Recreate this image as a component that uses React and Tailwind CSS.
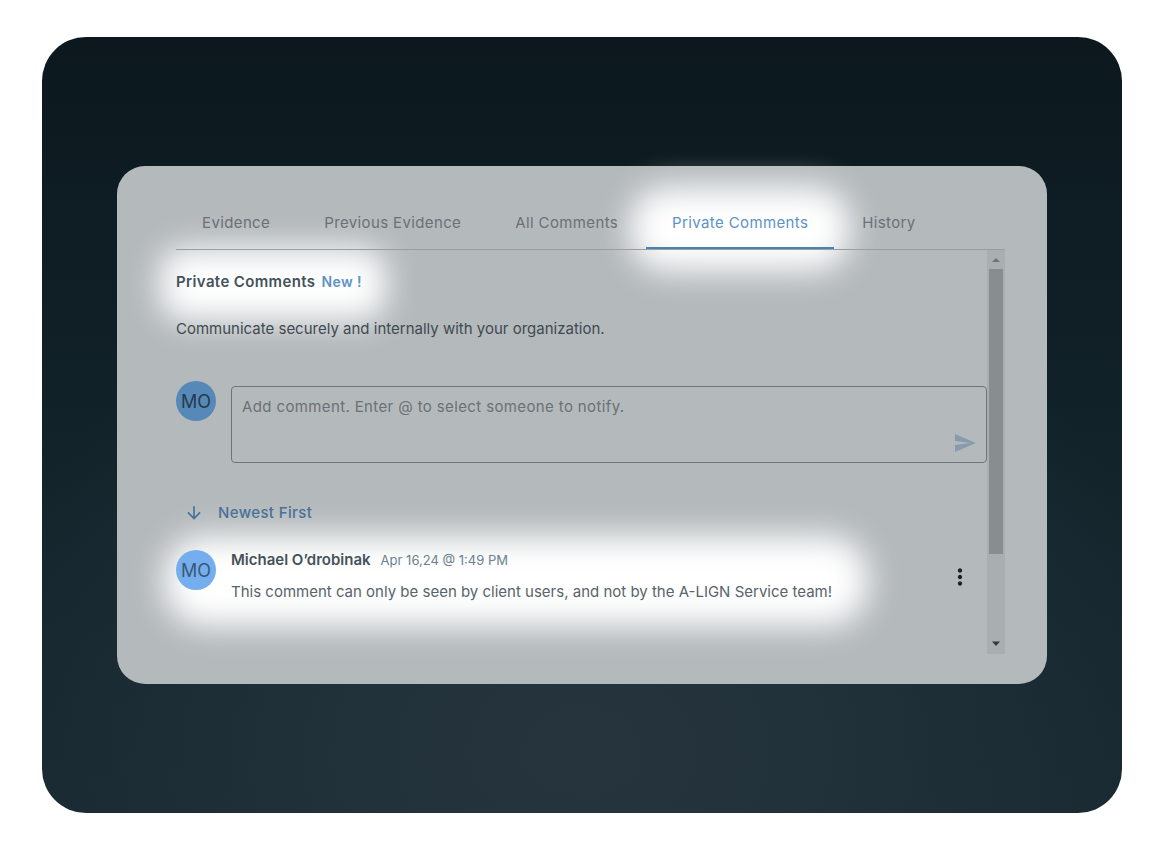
import React, { useState } from 'react';
import { MdArrowDownward, MdMoreVert, MdSend } from 'react-icons/md';

const tabs = ['Evidence', 'Previous Evidence', 'All Comments', 'Private Comments', 'History'];

const comments = [
  {
    id: 1,
    initials: 'MO',
    author: 'Michael O’drobinak',
    date: 'Apr 16,24 @ 1:49 PM',
    text: 'This comment can only be seen by client users, and not by the A-LIGN Service team!',
  },
];

function Avatar({ initials, className }) {
  return (
    <div className={`flex size-10 shrink-0 items-center justify-center rounded-full pt-0.5 text-lg ${className}`}>
      {initials}
    </div>
  );
}

// Soft white spotlight behind the highlighted parts
function Glow({ className }) {
  return <span aria-hidden="true" className={`pointer-events-none absolute -z-10 bg-white ${className}`} />;
}

function Scrollbar() {
  return (
    <div aria-hidden="true" className="flex w-[18px] shrink-0 flex-col items-center bg-[#a9aeb1]">
      <svg width="8" height="19" viewBox="0 0 8 19" fill="#6f7477">
        <path d="M0 12L4 8L8 12Z" />
      </svg>
      <div className="h-[285px] w-3.5 bg-[#888d90]" />
      <svg className="mt-auto" width="8" height="19" viewBox="0 0 8 19" fill="#34393c">
        <path d="M0 6.5L4 11L8 6.5Z" />
      </svg>
    </div>
  );
}

export default function App() {
  const [activeTab, setActiveTab] = useState('Private Comments');
  const [draft, setDraft] = useState('');

  return (
    <div className="min-h-screen bg-white pt-[37px] pr-[46px] pb-[55px] pl-[42px] font-['Inter',sans-serif]">
      <main className="rounded-[44px] bg-[radial-gradient(ellipse_60%_65%_at_50%_92%,#26353d_0%,#21313a_40%,transparent_100%),linear-gradient(to_bottom,#0c181d_0%,#0e1c23_20%,#13242b_60%,#172830_100%)] px-[75px] py-[129px]">
        <section className="isolate rounded-[28px] bg-[#b4b9bc] pt-[31px] pr-[42px] pb-[30px] pl-[59px]">
          <div role="tablist" className="flex gap-0.5 border-b border-[#999ea1]">
            {tabs.map((tab) => {
              const active = tab === activeTab;
              return (
                <button
                  key={tab}
                  type="button"
                  role="tab"
                  aria-selected={active}
                  onClick={() => setActiveTab(tab)}
                  className={`relative border-b-2 px-[26px] pt-4 pb-3.5 text-[15px] leading-5 tracking-wide whitespace-nowrap ${
                    active ? 'border-[#4a82b4] text-[#5c93c4]' : 'border-transparent text-[#6b7174]'
                  }`}
                >
                  {active && <Glow className="-inset-x-4 -top-2.5 -bottom-6 rounded-[36px] blur-lg" />}
                  {tab}
                </button>
              );
            })}
          </div>

          <div className="flex">
            <div className="min-w-0 flex-1 pt-[22px] pb-[52px]">
              <div className="flex">
                <h1 className="relative flex items-center gap-1.5 text-[15px] leading-5 font-semibold tracking-wide text-[#44525a]">
                  <Glow className="-top-6 -right-6 -bottom-7 -left-4 rounded-3xl blur-lg" />
                  Private Comments
                  <span className="text-sm leading-5 text-[#5c93c4]">New !</span>
                </h1>
              </div>

              <p className="mt-[27px] text-[15px] leading-5 text-[#3f4a50]">
                Communicate securely and internally with your organization.
              </p>

              <form className="mt-[42px] flex gap-[15px]" onSubmit={(e) => e.preventDefault()}>
                <Avatar initials="MO" className="bg-[#5688b8] text-[#263a4b]" />
                <div className="relative mt-[5px] flex-1">
                  <textarea
                    aria-label="Add comment"
                    value={draft}
                    onChange={(e) => setDraft(e.target.value)}
                    placeholder="Add comment. Enter @ to select someone to notify."
                    className="block h-[77px] w-full resize-none rounded border border-[#6f7578] bg-transparent px-2.5 py-2.5 text-[15px] leading-5 tracking-wide text-[#3f4a50] placeholder:text-[#6b7174] focus:outline-none"
                  />
                  <button type="submit" aria-label="Send" className="absolute right-2.5 bottom-2 text-[#869cae]">
                    <MdSend size={24} />
                  </button>
                </div>
              </form>

              <button type="button" className="mt-10 ml-2 flex items-center gap-3.5 text-[15px] leading-5 font-medium tracking-wide text-[#477298]">
                <MdArrowDownward size={20} />
                Newest First
              </button>

              <ul className="mt-[27px]">
                {comments.map((c) => (
                  <li key={c.id} className="flex items-start">
                    <article className="relative flex gap-[15px]">
                      <Glow className="-top-3.5 -right-9 -bottom-6 -left-3 rounded-[40px] blur-lg" />
                      <Avatar initials={c.initials} className="bg-[#74aeee] text-[#3a5876]" />
                      <div>
                        <div className="flex items-center gap-2.5">
                          <h2 className="text-[15px] leading-5 font-semibold text-[#44525a]">{c.author}</h2>
                          <time className="text-[13px] leading-5 text-[#6b818f]">{c.date}</time>
                        </div>
                        <p className="mt-3 text-[15px] leading-5 text-[#57646c]">{c.text}</p>
                      </div>
                    </article>
                    <button type="button" aria-label="Comment options" className="mt-3.5 mr-3.5 ml-auto text-[#1b2124]">
                      <MdMoreVert size={26} />
                    </button>
                  </li>
                ))}
              </ul>
            </div>
            <Scrollbar />
          </div>
        </section>
      </main>
    </div>
  );
}
